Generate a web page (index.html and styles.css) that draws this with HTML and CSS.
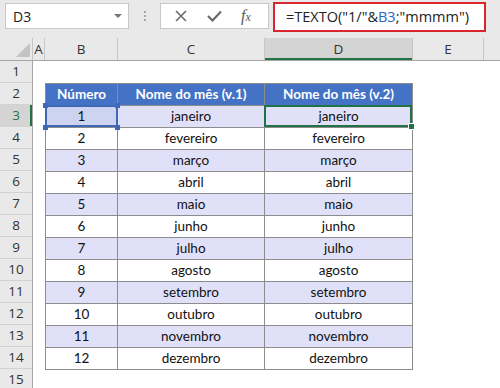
FILE: index.html
```html
<!DOCTYPE html>
<html lang="pt">
<head>
    <meta charset="UTF-8">
    <meta name="viewport" content="width=device-width, initial-scale=1.0">
    <title>TEXTO - nome do mês</title>
    <link rel="stylesheet" href="styles.css">
</head>
<body>
    <div class="toolbar">
        <div class="namebox"><span>D3</span><span class="caret"></span></div>
        <div class="grip"><span></span><span></span><span></span></div>
        <div class="fxbox">
            <svg class="icon-x" width="12" height="12" viewBox="0 0 12 12"><path d="M1 1 L11 11 M11 1 L1 11" stroke="#6b6b6b" stroke-width="1.6" fill="none"/></svg>
            <svg class="icon-ok" width="15" height="12" viewBox="0 0 15 12"><path d="M1 6 L5.5 10.5 L14 1.5" stroke="#6b6b6b" stroke-width="2.2" fill="none"/></svg>
            <span class="icon-fx">f<small>x</small></span>
        </div>
        <div class="formula">=TEXTO("1/"&amp;<span class="ref">B3</span>;"mmmm")</div>
    </div>

    <div class="colheads">
        <div class="ch corner"><span class="tri"></span></div>
        <div class="ch col-a">A</div>
        <div class="ch col-b">B</div>
        <div class="ch col-c">C</div>
        <div class="ch col-d cur">D</div>
        <div class="ch col-e">E</div>
        <div class="ch col-rest"></div>
    </div>

    <div class="sheet">
        <div class="rownums">
            <div class="rn">1</div>
            <div class="rn">2</div>
            <div class="rn cur">3</div>
            <div class="rn">4</div>
            <div class="rn">5</div>
            <div class="rn">6</div>
            <div class="rn">7</div>
            <div class="rn">8</div>
            <div class="rn">9</div>
            <div class="rn">10</div>
            <div class="rn">11</div>
            <div class="rn">12</div>
            <div class="rn">13</div>
            <div class="rn">14</div>
            <div class="rn">15</div>
        </div>
        <div class="cells">
            <div class="data">
                <div class="row head"><div>Número</div><div>Nome do mês (v.1)</div><div>Nome do mês (v.2)</div></div>
                <div class="row alt">
                    <div class="sel">1<span class="h tl"></span><span class="h tr"></span><span class="h bl"></span><span class="h br"></span></div>
                    <div>janeiro</div>
                    <div class="active">janeiro<span class="fill"></span></div>
                </div>
                <div class="row"><div>2</div><div>fevereiro</div><div>fevereiro</div></div>
                <div class="row alt"><div>3</div><div>março</div><div>março</div></div>
                <div class="row"><div>4</div><div>abril</div><div>abril</div></div>
                <div class="row alt"><div>5</div><div>maio</div><div>maio</div></div>
                <div class="row"><div>6</div><div>junho</div><div>junho</div></div>
                <div class="row alt"><div>7</div><div>julho</div><div>julho</div></div>
                <div class="row"><div>8</div><div>agosto</div><div>agosto</div></div>
                <div class="row alt"><div>9</div><div>setembro</div><div>setembro</div></div>
                <div class="row"><div>10</div><div>outubro</div><div>outubro</div></div>
                <div class="row alt"><div>11</div><div>novembro</div><div>novembro</div></div>
                <div class="row"><div>12</div><div>dezembro</div><div>dezembro</div></div>
            </div>
        </div>
    </div>
</body>
</html>
```

FILE: styles.css
```css
body {
    margin: 0;
    height: 388px;
    overflow: hidden;
    font-family: "Open Sans", sans-serif;
    background: #fff;
}

/* formula bar */
.toolbar {
    display: flex;
    align-items: flex-start;
    height: 38px;
    box-sizing: border-box;
    padding: 3px 0 0 5px;
    background: #e9e9e9;
}

.namebox {
    width: 124px;
    height: 26px;
    box-sizing: border-box;
    display: flex;
    align-items: center;
    justify-content: space-between;
    padding: 0 6px 0 7px;
    background: #fff;
    border: 1px solid #c8c8c8;
    font-size: 14px;
    color: #222;
}

.caret {
    border-left: 4px solid transparent;
    border-right: 4px solid transparent;
    border-top: 4px solid #777;
}

.grip {
    width: 31px;
    display: flex;
    flex-direction: column;
    align-items: center;
    gap: 2px;
    padding-top: 8px;
}

.grip span {
    width: 2px;
    height: 2px;
    background: #a9a9a9;
}

.fxbox {
    width: 109px;
    height: 26px;
    box-sizing: border-box;
    display: flex;
    align-items: center;
    padding-left: 14px;
    background: #fff;
    border: 1px solid #c8c8c8;
}

.icon-ok {
    margin-left: 20px;
}

.icon-fx {
    margin-left: 19px;
    font-family: "Liberation Serif", serif;
    font-style: italic;
    font-size: 16px;
    color: #5a5a5a;
}

.icon-fx small {
    font-size: 12px;
}

.formula {
    width: 213px;
    height: 30px;
    box-sizing: border-box;
    margin: -1px 0 0 4px;
    padding-left: 11px;
    background: #fff;
    border: 2px solid #d9252c;
    font-size: 14.5px;
    line-height: 25px;
    color: #222;
    white-space: nowrap;
}

.ref {
    color: #2f63c8;
}

/* column headers */
.colheads {
    display: flex;
    height: 23px;
    box-sizing: border-box;
    background: #e9e9e9;
    border-bottom: 1px solid #a6a6a6;
}

.ch {
    box-sizing: border-box;
    border-right: 1px solid #c6c6c6;
    text-align: center;
    font-size: 13.5px;
    line-height: 22px;
    color: #333;
}

.corner {
    width: 33px;
    display: flex;
    align-items: flex-end;
    justify-content: flex-end;
    padding: 0 2px 3px 0;
}

.tri {
    border-left: 14px solid transparent;
    border-bottom: 14px solid #c3c3c3;
}

.col-a { width: 12px; }
.col-b { width: 73px; }
.col-c { width: 147px; }
.col-d { width: 148px; }
.col-e { width: 71px; }
.col-rest { flex: 1; border-right: none; }

.ch.cur {
    background: #d4d4d4;
    box-shadow: inset 0 -2px #217346;
}

/* row headers */
.sheet {
    display: flex;
}

.rownums {
    width: 33px;
    flex: none;
    box-sizing: border-box;
    background: #e9e9e9;
    border-right: 1px solid #a6a6a6;
}

.rn {
    height: 22px;
    box-sizing: border-box;
    border-bottom: 1px solid #d2d2d2;
    text-align: center;
    font-size: 13.5px;
    line-height: 21px;
    color: #333;
}

.rn.cur {
    background: #d4d4d4;
    color: #217346;
    box-shadow: inset -2px 0 #217346;
}

/* data */
.cells {
    padding: 22px 0 0 12px;
}

.data {
    display: grid;
    grid-template-columns: 72px 147px 148px;
    grid-auto-rows: 22px;
    width: max-content;
    border-left: 1px solid #8c8c8c;
    border-top: 1px solid #8c8c8c;
}

.row {
    display: contents;
}

.row > div {
    box-sizing: border-box;
    border-right: 1px solid #8c8c8c;
    border-bottom: 1px solid #8c8c8c;
    text-align: center;
    font-family: Lato, sans-serif;
    font-size: 13.5px;
    line-height: 21px;
    color: #111;
}

.head > div {
    background: #4472c4;
    color: #fff;
    font-weight: bold;
}

.alt > div {
    background: #e0e0f9;
}

.row > .sel {
    position: relative;
    background: #ccd4f1;
}

.sel::after {
    content: "";
    position: absolute;
    inset: -1px -1px 0 -1px;
    border: 2px solid #3f69b8;
}

.h {
    position: absolute;
    width: 5px;
    height: 5px;
    background: #3f69b8;
    z-index: 1;
}

.tl { left: -3px; top: -3px; }
.tr { right: -3px; top: -3px; }
.bl { left: -3px; bottom: -3px; }
.br { right: -3px; bottom: -3px; }

.row > .active {
    position: relative;
}

.active::after {
    content: "";
    position: absolute;
    inset: -1px 0 0 -1px;
    border: 2px solid #217346;
}

.fill {
    position: absolute;
    right: -3px;
    bottom: -3px;
    width: 5px;
    height: 5px;
    background: #217346;
    border: 1px solid #fff;
    z-index: 1;
}
```
